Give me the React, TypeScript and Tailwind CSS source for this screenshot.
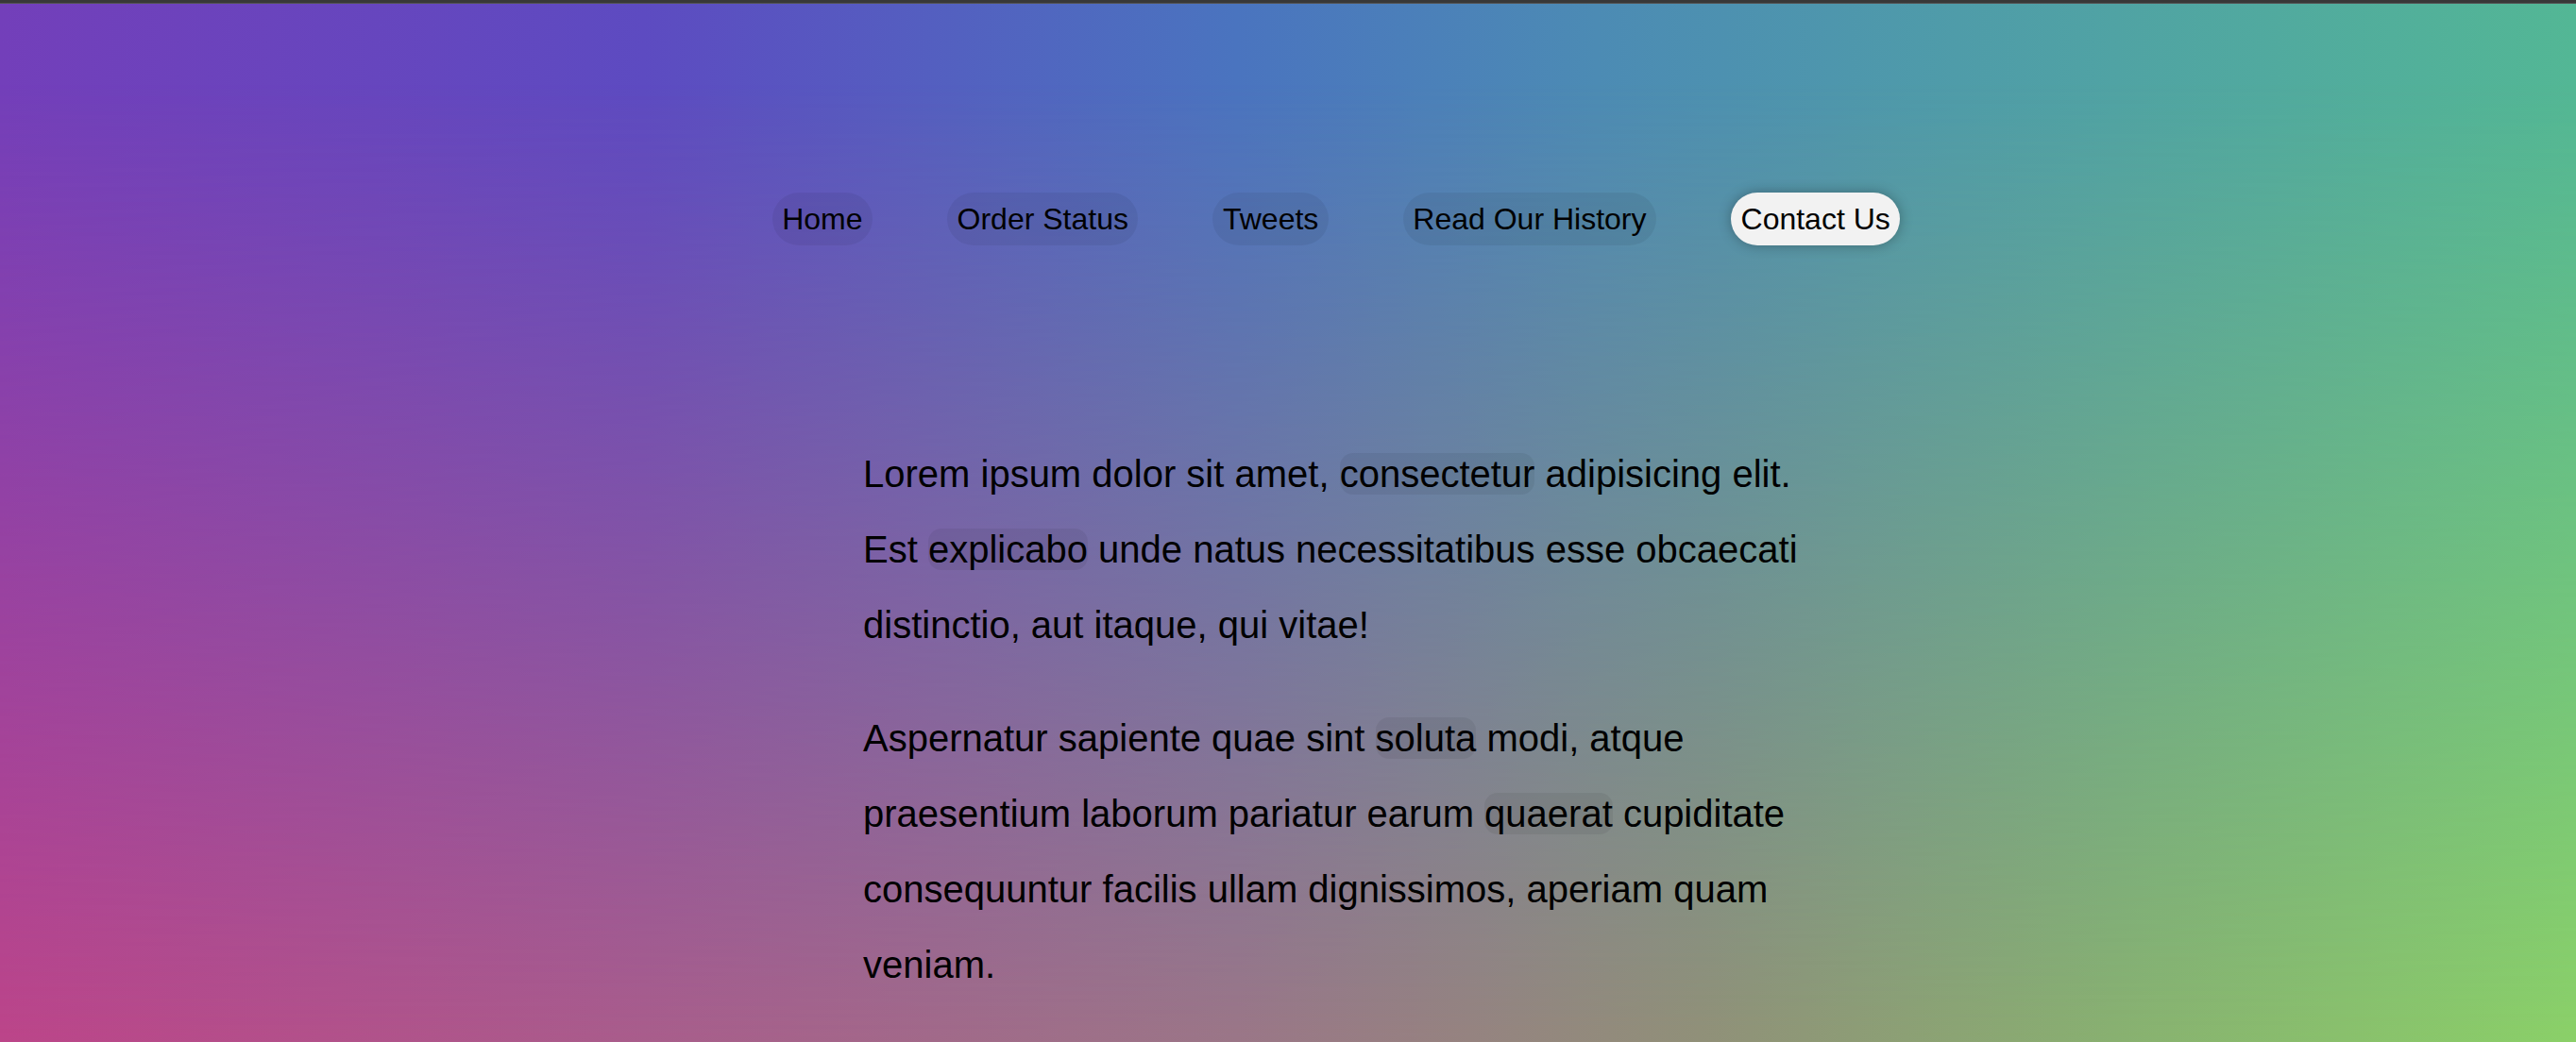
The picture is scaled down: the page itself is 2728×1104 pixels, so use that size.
const navItems = ['Home', 'Order Status', 'Tweets', 'Read Our History', 'Contact Us'];

function Mark({ children }: { children: string }) {
    return <span className="rounded-[14px] bg-black/[0.06]">{children}</span>;
}

export default function App() {
    const active = 'Contact Us';

    return (
        <div className="relative min-h-[1104px] overflow-hidden font-['Liberation_Sans',Arial,sans-serif] text-black">
            {/* background: top row blended into bottom row */}
            <div
                aria-hidden
                className="absolute inset-0 bg-[linear-gradient(to_right,#733fba_0%,#5d4bc1_25%,#4a74bf_48%,#4c8bb4_62%,#4f9ca9_76%,#53b795_100%)]"
            >
                <div className="h-full w-full bg-[linear-gradient(to_right,#bc4589_0%,#a95d8b_25%,#9b7687_48%,#919078_66%,#89b070_82%,#8bd068_100%)] [mask-image:linear-gradient(to_bottom,transparent_8%,black_100%)]" />
            </div>

            <div className="relative">
                <div className="h-[3px] bg-[#383838]" />
                <div className="h-px bg-[#535353]" />

                <nav className="flex justify-center gap-[79px] pl-[102px] pt-[200px] text-[32px] leading-[36px]">
                    {navItems.map((item) => (
                        <a
                            key={item}
                            href="#"
                            className={`rounded-full px-[10.5px] py-[10px] whitespace-nowrap ${
                                item === active
                                    ? 'bg-[#f2f2f2] shadow-[0_0_14px_rgba(0,0,0,0.3)]'
                                    : 'bg-black/[0.06]'
                            }`}
                        >
                            {item}
                        </a>
                    ))}
                </nav>

                <main className="ml-[914px] mt-[202px] w-[1050px] text-[40px] leading-[80px]">
                    <p>
                        Lorem ipsum dolor sit amet, <Mark>consectetur</Mark> adipisicing elit. Est{' '}
                        <Mark>explicabo</Mark> unde natus necessitatibus esse obcaecati distinctio, aut itaque, qui
                        vitae!
                    </p>
                    <p className="mt-[40px]">
                        Aspernatur sapiente quae sint <Mark>soluta</Mark> modi, atque praesentium laborum pariatur
                        earum <Mark>quaerat</Mark> cupiditate consequuntur facilis ullam dignissimos, aperiam quam
                        veniam.
                    </p>
                </main>
            </div>
        </div>
    );
}
